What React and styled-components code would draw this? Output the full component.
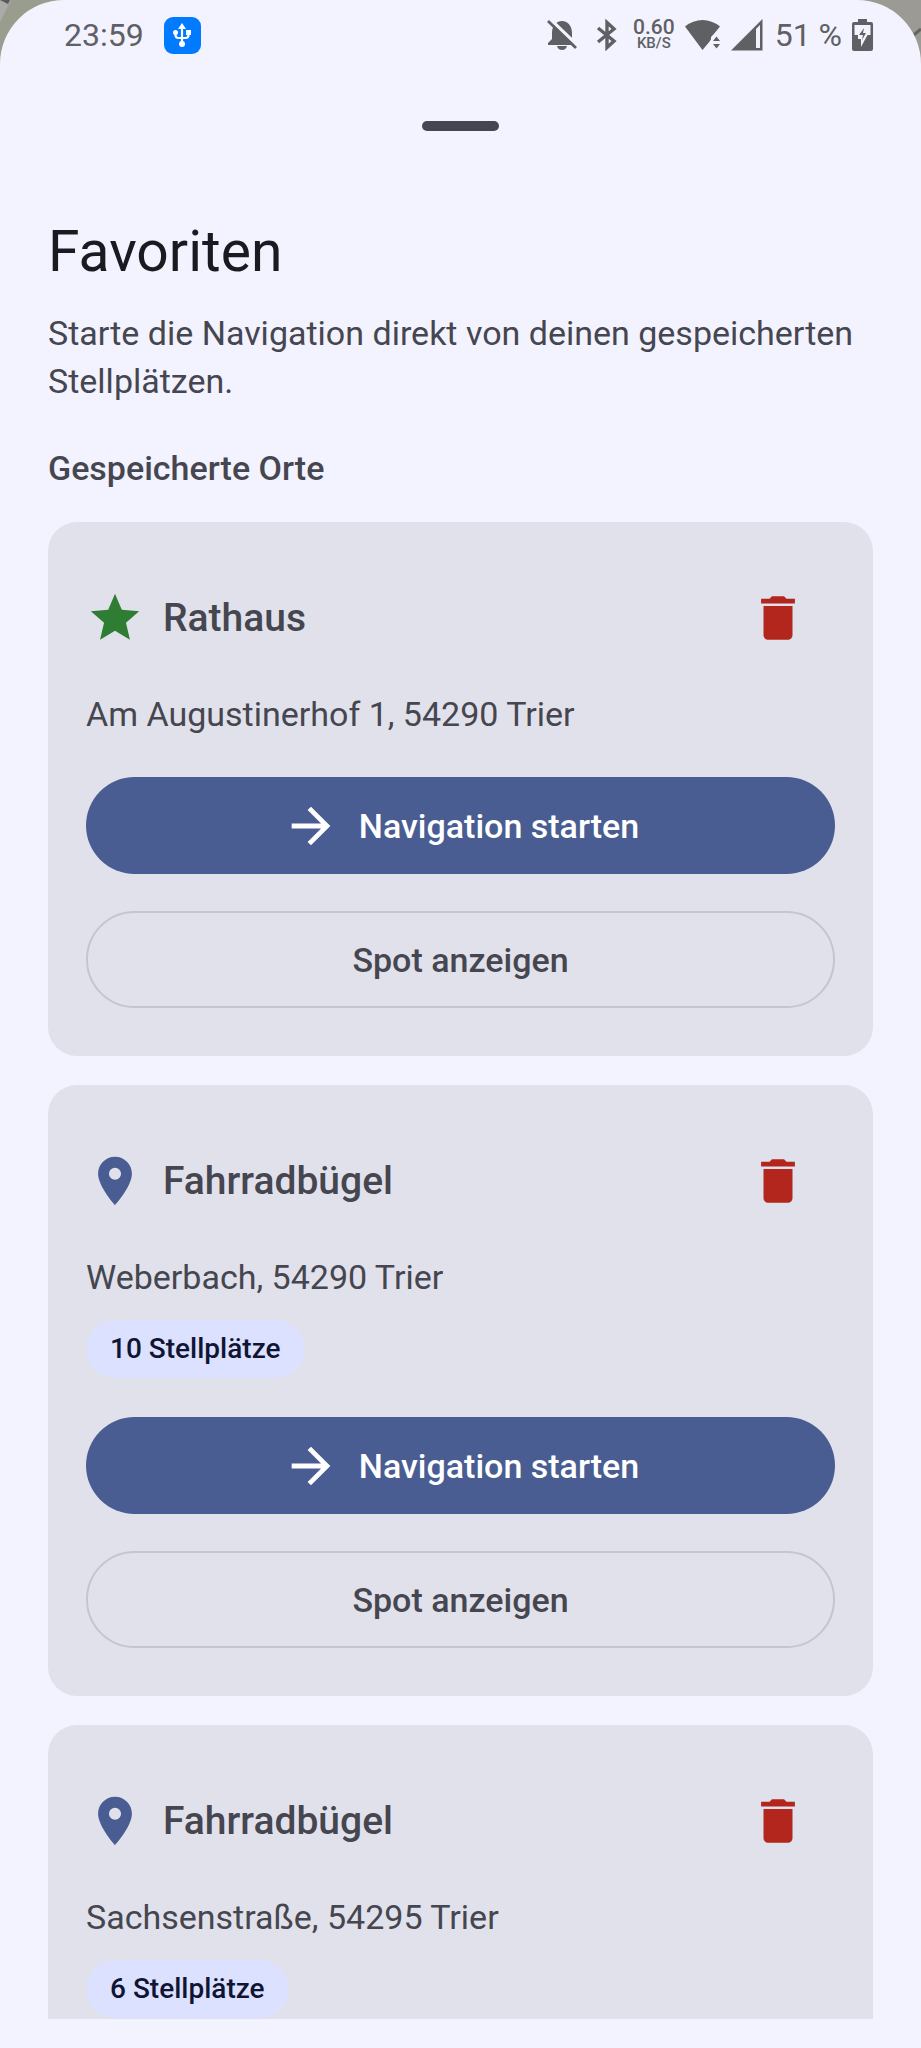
import React, { useState } from "react";
import styled, { createGlobalStyle } from "styled-components";

const GlobalStyle = createGlobalStyle`
  * {
    box-sizing: border-box;
  }
  body {
    margin: 0;
    background-color: #f3f3ff;
    font-family: Roboto, "Liberation Sans", sans-serif;
  }
`;

const Backdrop = styled.div`
  height: 100vh;
  background: linear-gradient(90deg, #999d8d 50%, #9b9a95 50%);
  position: relative;
`;

const BackdropDetail = styled.svg`
  position: absolute;
  top: 0;
  left: ${({ $side }) => ($side === "left" ? "0" : "auto")};
  right: ${({ $side }) => ($side === "right" ? "0" : "auto")};
`;

const Sheet = styled.div`
  position: relative;
  display: flex;
  flex-direction: column;
  height: 100%;
  padding-bottom: 29px;
  border-radius: 64px 64px 0 0;
  background-color: #f3f3ff;
  color: #45464f;
  overflow: hidden;
`;

const StatusBar = styled.header`
  display: flex;
  align-items: center;
  justify-content: space-between;
  height: 70px;
  padding: 0 48px 0 64px;
  color: #5f6064;
  font-size: 32px;
  line-height: 38px;
`;

const StatusGroup = styled.div`
  display: flex;
  align-items: center;
  gap: ${({ $gap }) => $gap}px;
`;

const UsbBadge = styled.span`
  display: flex;
  align-items: center;
  justify-content: center;
  width: 37px;
  height: 37px;
  border-radius: 9px;
  background-color: #007bff;
  color: white;
`;

const Speed = styled.div`
  display: flex;
  flex-direction: column;
  align-items: center;
  font-size: 21px;
  font-weight: 500;
  line-height: 17px;
`;

const SpeedUnit = styled.span`
  font-size: 15px;
  line-height: 15px;
`;

const Handle = styled.div`
  flex: none;
  width: 77px;
  height: 10px;
  margin: 51px auto 82px;
  border-radius: 5px;
  background-color: #45464f;
`;

const Intro = styled.div`
  padding: 0 48px;
`;

const Title = styled.h1`
  margin: 0 0 19px;
  color: #1a1b21;
  font-size: 57px;
  font-weight: 400;
  line-height: 77px;
`;

const Text = styled.p`
  margin: 0;
  font-size: 34px;
  line-height: 48px;
`;

const SectionTitle = styled.h2`
  margin: 39px 0 30px;
  font-size: 34px;
  font-weight: 500;
  line-height: 48px;
`;

const PlaceList = styled.main`
  display: flex;
  flex-direction: column;
  flex: 1;
  gap: 29px;
  min-height: 0;
  padding: 0 48px;
  overflow-y: auto;
  scrollbar-width: none;
`;

const Card = styled.article`
  display: flex;
  flex-direction: column;
  flex: none;
  padding: 38px 38px 48px;
  border-radius: 29px;
  background-color: #e1e1eb;
`;

const CardHeader = styled.div`
  display: flex;
  align-items: center;
  gap: 19px;
  height: 115px;
  margin-bottom: 15px;
`;

const CardTitle = styled.h3`
  flex: 1;
  margin: 0;
  font-size: 39px;
  font-weight: 500;
  line-height: 58px;
`;

const DeleteButton = styled.button`
  display: flex;
  align-items: center;
  justify-content: center;
  width: 115px;
  height: 115px;
  padding: 0;
  border: none;
  background-color: transparent;
  color: #b3261e;
  cursor: pointer;
`;

const Chip = styled.span`
  align-self: flex-start;
  margin-top: 19px;
  padding: 0 24px;
  border-radius: 29px;
  background-color: #dbe1ff;
  color: #0f1533;
  font-size: 28px;
  font-weight: 500;
  line-height: 58px;
`;

const Actions = styled.div`
  display: flex;
  flex-direction: column;
  gap: 37px;
  margin-top: 39px;
`;

const ActionButton = styled.button`
  display: flex;
  align-items: center;
  justify-content: center;
  gap: 19px;
  height: 97px;
  border: ${({ $primary }) => ($primary ? "none" : "2px solid #c5c5d0")};
  border-radius: 49px;
  background-color: ${({ $primary }) => ($primary ? "#495d92" : "transparent")};
  color: ${({ $primary }) => ($primary ? "white" : "#45464f")};
  font-family: inherit;
  font-size: 34px;
  font-weight: 500;
  cursor: pointer;
`;

const icons = {
  star: "M12 17.27 18.18 21l-1.64-7.03L22 9.24l-7.19-.61L12 2 9.19 8.63 2 9.24l5.46 4.73L5.82 21z",
  pin: "M12 2C8.13 2 5 5.13 5 9c0 5.25 7 13 7 13s7-7.75 7-13c0-3.87-3.13-7-7-7zm0 9.5a2.5 2.5 0 0 1 0-5 2.5 2.5 0 0 1 0 5z",
  trash: "M6 19c0 1.1.9 2 2 2h8c1.1 0 2-.9 2-2V7H6v12zM19 4h-3.5l-1-1h-5l-1 1H5v2h14V4z",
  arrow: "m12 4-1.41 1.41L16.17 11H4v2h12.17l-5.58 5.59L12 20l8-8z",
};

const Icon = ({ name, size = 58, color = "currentColor" }) => (
  <svg width={size} height={size} viewBox="0 0 24 24" fill={color} aria-hidden="true">
    <path d={icons[name]} />
  </svg>
);

const UsbIcon = () => (
  <svg width="20" height="25" viewBox="0 0 20 25" fill="currentColor" aria-hidden="true">
    <path d="M10 0l4 6h-8z" />
    <circle cx="10" cy="21" r="3" />
    <circle cx="3.5" cy="9.5" r="2.5" />
    <rect x="14" y="7" width="5" height="5" />
    <path
      d="M10 4v17M3.5 9v3q0 3 3 3h7q3 0 3-3V9"
      fill="none"
      stroke="currentColor"
      strokeWidth="2.2"
    />
  </svg>
);

const BellOffIcon = () => (
  <svg width="34" height="32" viewBox="0 0 34 32" fill="currentColor" aria-hidden="true">
    <path d="M5 20V14C5 7 9 2 15 2S25 7 25 14v6l4 5v1H1v-2z" />
    <path d="M10 27h10q-1 4-5 4t-5-4z" />
    <path d="M3 0l28 27" stroke="#f3f3ff" strokeWidth="3.4" />
    <path d="M1 2l28 27" stroke="currentColor" strokeWidth="2.8" />
  </svg>
);

const BluetoothIcon = () => (
  <svg width="32" height="32" viewBox="0 0 32 32" aria-hidden="true">
    <path
      d="M7 9l16 13-7 6.500V3.500L23 10 7 23"
      fill="none"
      stroke="currentColor"
      strokeWidth="3.4"
    />
  </svg>
);

const WifiIcon = () => (
  <svg width="36" height="32" viewBox="0 0 36 32" fill="currentColor" aria-hidden="true">
    <path d="M0 7.5Q8 1 17.500 1T35 7.500L28 16l-3 6-7.500 9z" />
    <path d="M26 30V18l2-2h8v14z" fill="#f3f3ff" />
    <path d="M28 22l3.500-4.500L35 22zM28 25l3.500 4.500L35 25z" />
  </svg>
);

const SignalIcon = () => (
  <svg width="34" height="34" viewBox="0 0 34 34" fill="currentColor" aria-hidden="true">
    <path d="M0 32.500L31.500 1v31.500z" />
    <path d="M25 11l4-4v23h-4z" fill="#f3f3ff" />
  </svg>
);

const BatteryIcon = () => (
  <svg width="21" height="32" viewBox="0 0 21 32" fill="currentColor" aria-hidden="true">
    <path d="M6 0h9v3h4q2 0 2 2v25q0 2-2 2H2q-2 0-2-2V5q0-2 2-2h4z" />
    <path d="M2.500 6h16v10h-3L9 28v-8H6v-4H2.500z" fill="#f3f3ff" />
    <path d="M12 9l-5 7h4l-1 5 4-7h-3z" />
  </svg>
);

const initialPlaces = [
  { id: 1, name: "Rathaus", address: "Am Augustinerhof 1, 54290 Trier", starred: true },
  { id: 2, name: "Fahrradbügel", address: "Weberbach, 54290 Trier", spots: 10 },
  { id: 3, name: "Fahrradbügel", address: "Sachsenstraße, 54295 Trier", spots: 6 },
];

const PlaceCard = ({ place, onDelete }) => (
  <Card>
    <CardHeader>
      {place.starred ? (
        <Icon name="star" color="#2e7d32" />
      ) : (
        <Icon name="pin" color="#495d92" />
      )}
      <CardTitle>{place.name}</CardTitle>
      <DeleteButton aria-label="Löschen" onClick={() => onDelete(place.id)}>
        <Icon name="trash" />
      </DeleteButton>
    </CardHeader>
    <Text>{place.address}</Text>
    {place.spots && <Chip>{place.spots} Stellplätze</Chip>}
    <Actions>
      <ActionButton $primary>
        <Icon name="arrow" />
        Navigation starten
      </ActionButton>
      <ActionButton>Spot anzeigen</ActionButton>
    </Actions>
  </Card>
);

const App = () => {
  const [places, setPlaces] = useState(initialPlaces);

  const handleDelete = (id) => {
    setPlaces(places.filter((place) => place.id !== id));
  };

  return (
    <Backdrop>
      <GlobalStyle />
      <BackdropDetail $side="left" width="20" height="30" aria-hidden="true">
        <path d="M0 0h11L0 22z" fill="#aaaaa8" />
        <path d="M0 0h10l-2 4z" fill="#5c5a58" />
      </BackdropDetail>
      <BackdropDetail $side="right" width="20" height="50" aria-hidden="true">
        <path d="M9 38L20 29" stroke="#66645f" strokeWidth="3" />
      </BackdropDetail>
      <Sheet>
        <StatusBar>
          <StatusGroup $gap={20}>
            <span>23:59</span>
            <UsbBadge>
              <UsbIcon />
            </UsbBadge>
          </StatusGroup>
          <StatusGroup $gap={10}>
            <BellOffIcon />
            <BluetoothIcon />
            <Speed>
              0.60
              <SpeedUnit>KB/S</SpeedUnit>
            </Speed>
            <WifiIcon />
            <SignalIcon />
            <span>51 %</span>
            <BatteryIcon />
          </StatusGroup>
        </StatusBar>
        <Handle />
        <Intro>
          <Title>Favoriten</Title>
          <Text>Starte die Navigation direkt von deinen gespeicherten Stellplätzen.</Text>
          <SectionTitle>Gespeicherte Orte</SectionTitle>
        </Intro>
        <PlaceList>
          {places.map((place) => (
            <PlaceCard key={place.id} place={place} onDelete={handleDelete} />
          ))}
        </PlaceList>
      </Sheet>
    </Backdrop>
  );
};

export default App;
